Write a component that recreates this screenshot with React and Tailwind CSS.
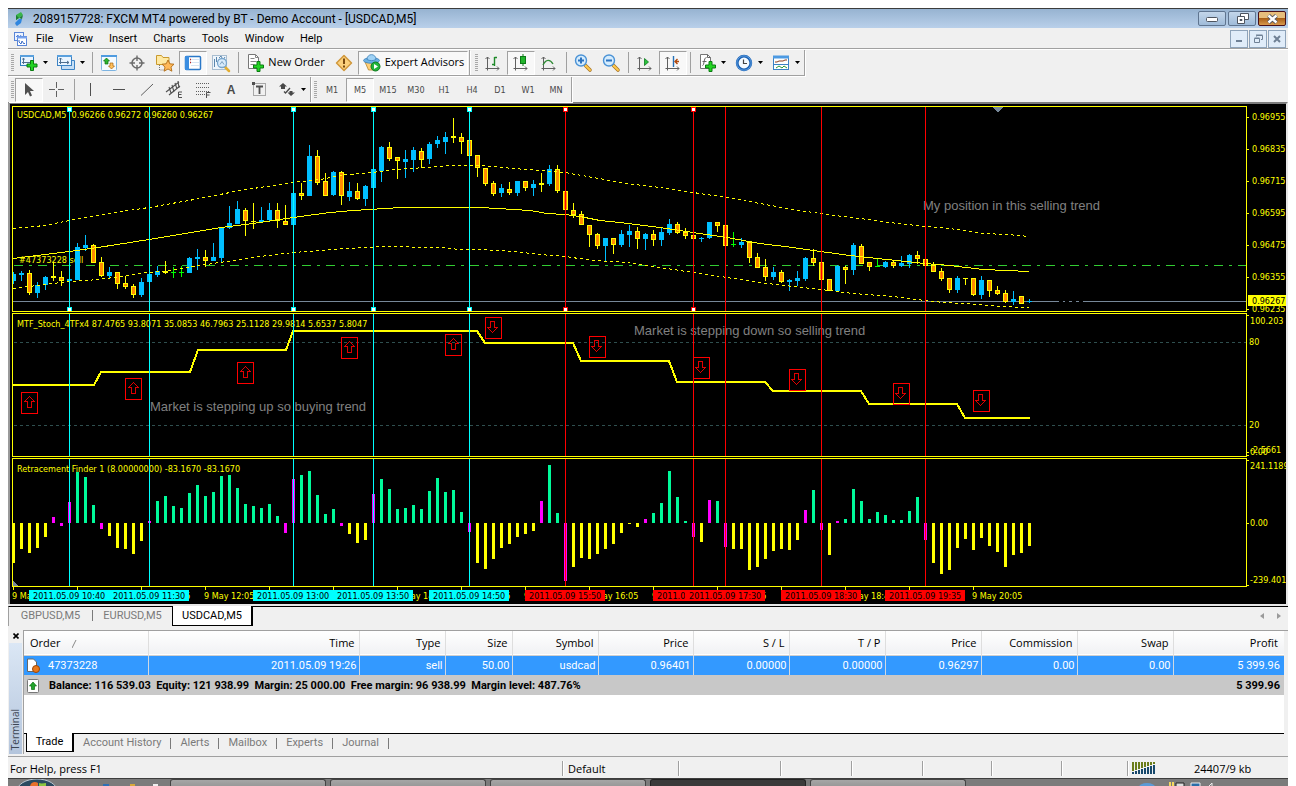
import React from "react";

/* ---------- chart data ---------- */

// One entry per bar: kind, high, body top, body bottom, low (measured down from y = 100).
const CANDLES = `b172,174,181,184 b171,173,175,181 o170,173,193,195 b182,185,193,198 b176,177,185,190 o162,176,178,181 o171,177,181,186 b178,179,181,182
b143,147,180,180 b135,145,148,151 o144,145,163,163 o157,162,176,177 b167,172,176,179 o172,172,184,189 o176,183,187,189 o184,186,195,198
b178,182,195,197 b174,174,182,182 b166,171,175,177 o161,171,173,174 g167,172,173,178 g166,172,173,177 b157,158,173,173 b149,157,159,170
o150,157,161,167 b143,157,161,161 b127,127,158,162 b106,123,128,129 b101,109,124,124 o108,110,121,136 o103,121,122,129 b107,120,122,123
b103,110,120,122 o103,110,121,128 o105,121,125,125 b93,93,125,125 o83,93,96,100 b45,56,96,96 o50,56,83,85 o73,81,96,96
b71,72,95,96 o71,72,96,105 b82,91,97,101 o83,91,99,100 b85,86,99,106 b69,69,88,88 b46,47,71,82 o42,47,59,61
o57,57,61,79 b50,59,62,78 b47,50,60,72 o48,51,60,68 b42,44,59,64 b36,40,44,48 b32,37,42,54 o18,36,38,43
o33,37,42,54 o40,40,56,56 o55,55,68,77 o68,68,84,86 o81,83,94,96 b84,88,93,97 o82,89,93,95 b81,81,93,96
o81,81,88,91 b80,84,88,96 o73,83,85,92 b65,69,84,86 o65,69,91,93 o91,91,110,110 o103,110,115,118 o111,114,125,125
o125,125,135,147 o133,134,146,149 b138,138,146,162 o138,138,145,154 b130,134,145,147 b125,131,135,147 o127,131,139,149 b133,134,139,150
o130,134,140,146 b128,132,140,146 b119,124,133,135 o122,124,133,134 o128,132,136,139 o135,135,139,139 b137,138,139,142 b122,122,138,139
o122,122,126,132 o125,125,146,146 g132,144,145,147 b138,142,145,148 o141,142,158,163 o153,157,168,168 o159,167,177,181 b167,172,177,180
o170,172,182,183 b179,180,182,191 b171,178,181,186 b157,158,179,181 o149,158,163,166 o162,162,180,180 o179,179,191,191 b165,166,191,191
o166,167,170,184 b143,145,170,175 o144,146,164,164 o162,162,167,171 g159,166,167,167 b161,162,167,168 o160,162,166,168 b156,163,166,167
b154,155,164,168 o151,155,159,164 o159,159,166,166 o162,165,172,172 o168,171,179,181 o178,178,190,193 b176,178,190,193 o178,178,179,185
o178,178,195,196 b176,180,195,199 o180,180,191,197 o186,190,194,195 o190,193,202,203 b191,199,202,205 o196,196,204,204 b199,201,202,203`
  .split(/\s+/)
  .map((s) => ({ kind: s[0], v: s.slice(1).split(",").map((n) => Number(n) + 100) }));

// Signed bar heights; a leading "m" marks the magenta bars.
const HISTOGRAM =
  "-40 -26 -30 -25 -14 m6 m-3 m21 51 46 18 m-6 -13 -25 -26 -31 -18 m2 22 27 17 15 30 38 27 31 47 48 35 19 17 15 19 7 m-10 m44 48 52 28 9 14 m-3 -11 -20 -17 m29 44 34 14 15 18 14 32 45 31 33 11 m-9 -40 -46 -36 -25 -21 -14 -11 -8 m22 58 10 m-58 -44 -35 -36 -31 -26 -21 -10 -1 -4 m4 10 20 52 26 2 m-14 -19 m23 22 m-24 -26 -26 -47 -44 -36 -28 -26 -27 -17 m13 33 m-7 -32 m2 4 34 22 4 11 8 3 3 12 26 m-17 -40 -51 -47 -25 -16 -27 -15 -23 -29 -44 -32 -30 -23".split(
    " "
  );

const MIDDLE =
  "13,258 45,254 69,251 98,247 149,239 185,233 221,227 253,223 293,217 330,212 353,210 385,208 402,207 480,207 498,208 530,210 547,213 565,214 580,216 600,220 620,222 660,227 693,232 727,237 760,243 793,247 813,250 850,255 887,259 925,263 950,265 983,269 1029,271";
const UPPER =
  "13,228 45,225 69,220 98,215 115,212 149,207 200,198 240,190 293,182 320,179 347,174 373,172 393,169 427,167 453,165 480,165 513,168 540,170 565,172 593,177 627,183 660,187 693,192 727,197 760,203 793,209 827,214 860,218 890,222 925,226 950,228 983,233 1007,234 1029,236";
const LOWER =
  "13,288 45,284 69,281 88,280 115,277 145,272 165,271 200,265 233,260 260,256 293,252 320,250 347,248 383,246 440,247 460,249 480,249 513,251 540,254 565,256 593,260 627,262 660,267 693,272 727,277 760,282 793,286 821,289 853,293 893,296 925,300 943,302 967,303 1000,306 1029,307";
const STEPS =
  "13,385 94,385 101,372 190,372 198,350 286,350 293,331 477,331 485,343 573,343 581,361 669,361 677,382 765,382 773,391 861,391 869,404 957,404 965,418 1030,418";

const CYAN = "#00ffff";
const RED = "#ff0000";
const TIME_LINES = [
  { x: 69, c: CYAN, t: "10:40", handle: true },
  { x: 149, c: CYAN, t: "11:30" },
  { x: 293, c: CYAN, t: "13:00", handle: true },
  { x: 373, c: CYAN, t: "13:50", handle: true },
  { x: 469, c: CYAN, t: "14:50", handle: true },
  { x: 565, c: RED, t: "15:50", handle: true },
  { x: 693, c: RED, t: "16:50", handle: true },
  { x: 725, c: RED, t: "17:30" },
  { x: 821, c: RED, t: "18:30" },
  { x: 925, c: RED, t: "19:35" },
];
// One tick every 64px; an empty entry is a tick whose label a time marker covers.
const AXIS_TIMES = ["10:05", "", "11:25", "12:05", "", "", "14:05", "14:45", "15:25", "16:05", "16:45", "17:25", "", "18:45", "", "20:05"];
const UP_ARROWS = [[21, 392], [125, 378], [237, 362], [341, 337], [445, 334]];
const DOWN_ARROWS = [[485, 317], [589, 336], [693, 357], [789, 369], [893, 383], [973, 390]];

const CHART_FONT = "font-['DejaVu_Sans_Condensed','DejaVu_Sans',sans-serif] text-[9px]";

/* ---------- chart pieces ---------- */

function Plot({ ox, oy, children }) {
  return (
    <svg className="block h-full w-full" shapeRendering="crispEdges">
      <g transform={`translate(${-ox} ${-oy})`}>{children}</g>
    </svg>
  );
}

function TimeLines({ y, h, handles }) {
  return TIME_LINES.map((l) => (
    <g key={l.x}>
      <rect x={l.x} y={y} width="1" height={h} fill={l.c} />
      {handles && l.handle && [107, 307].map((hy) => (
        <g key={hy}>
          <rect x={l.x - 2} y={hy} width="5" height="5" fill={l.c} />
          <rect x={l.x - 1} y={hy + 1} width="3" height="3" fill="#fff" />
        </g>
      ))}
    </g>
  ));
}

function Candle({ i, kind, v }) {
  const [hi, top, bot, lo] = v;
  const x = 13 + i * 8;
  const color = kind === "b" ? "#00bfff" : kind === "g" ? "#00ff00" : "#ffff00";
  return (
    <g>
      <rect x={x} y={hi} width="1" height={Math.max(lo - hi, 1)} fill={color} />
      <rect x={x - 2} y={top} width="5" height={bot - top} fill={color} />
      {kind === "o" && bot - top > 2 && <rect x={x - 1} y={top + 1} width="3" height={bot - top - 2} fill="#ff8c00" />}
    </g>
  );
}

function Panel({ height, left, scale }) {
  return (
    <div className={`flex w-full ${height}`}>
      <div className="min-w-0 flex-1 border border-[#ffff00]">{left}</div>
      <div className="w-[39px] shrink-0">{scale}</div>
    </div>
  );
}

const yellowText = (x, y, t) => (
  <text key={t + y} x={x} y={y} fill="#ffff00" xmlSpace="preserve">{t}</text>
);

function Chart() {
  return (
    <section aria-label="USDCAD chart" className={`border-t-2 border-r-2 border-l-2 border-t-[#7c7c7c] border-r-[#e6e6e6] border-l-[#9a9a9a] bg-black pt-[2px] pl-[2px] ${CHART_FONT}`}>
      <Panel
        height="h-[206px]"
        left={
          <Plot ox={13} oy={107}>
            <rect x="13" y="301" width="2400" height="1" fill="#778899" />
            <path d="M1059 301.5h10M1072 301.5h4M1079 301.5h4" stroke="#000" strokeDasharray="4 2" />
            <path d="M14 265.5H2400" stroke="#32cd32" strokeDasharray="9 6 3 6" />
            {yellowText(17, 118, "USDCAD,M5  0.96266 0.96272 0.96260 0.96267")}
            {yellowText(19, 263, "#47373228 sell")}
            {CANDLES.map((c, i) => <Candle key={i} i={i} {...c} />)}
            <g fill="none" stroke="#ffff00" transform="translate(0 .5)">
              <polyline points={MIDDLE} />
              <polyline points={UPPER} strokeDasharray="3 3" />
              <polyline points={LOWER} strokeDasharray="3 3" />
            </g>
            <text x="923" y="210" fill="#808080" className="font-['Liberation_Sans',sans-serif] text-[13px]">My position in this selling trend</text>
            <TimeLines y={107} h={204} handles />
            <path d="M992 107h11l-5 5h-1z" fill="#778899" />
          </Plot>
        }
        scale={
          <Plot ox={1247} oy={106}>
            {["0.96955", "0.96835", "0.96715", "0.96595", "0.96475", "0.96355", "0.96235"].map((p, i) => (
              <g key={p}>
                <rect x="1247" y={117 + i * 32} width="2" height="1" fill="#ffff00" />
                {yellowText(1252, 120 + i * 32, p)}
              </g>
            ))}
            <rect x="1248" y="295" width="60" height="11" fill="#ffff00" />
            <text x="1252" y="304" fill="#000">0.96267</text>
          </Plot>
        }
      />
      <div className="h-px" />
      <Panel
        height="h-[144px]"
        left={
          <Plot ox={13} oy={314}>
            <path d="M14 342.5H2400M14 425.5H2400" stroke="#2f4f4f" strokeDasharray="3 3" />
            {yellowText(17, 327, "MTF_Stoch_4TFx4 87.4765 93.8071 35.0853 46.7963 25.1128 29.9814 5.6537 5.8047")}
            <polyline points={STEPS} fill="none" stroke="#ffff00" strokeWidth="2" />
            <g fill="#808080" className="font-['Liberation_Sans',sans-serif] text-[13px]">
              <text x="150" y="411">Market is stepping up so buying trend</text>
              <text x="634" y="335">Market is stepping down so selling trend</text>
            </g>
            <TimeLines y={314} h={142} />
            {UP_ARROWS.map(([x, y]) => (
              <g key={x} transform={`translate(${x} ${y})`} fill="none" stroke={RED}>
                <rect x=".5" y=".5" width="16" height="21" />
                <path d="M8.5 4.5L3.5 9.500H6.500V15.500H10.500V9.500H13.500Z" stroke="#e00000" />
              </g>
            ))}
            {DOWN_ARROWS.map(([x, y]) => (
              <g key={x} transform={`translate(${x} ${y})`} fill="none" stroke={RED}>
                <rect x=".5" y=".5" width="16" height="21" />
                <path d="M7.500 15.500L2.500 10.500H5.500V4.500H9.500V10.500H12.500Z" stroke="#e00000" />
              </g>
            ))}
          </Plot>
        }
        scale={
          <Plot ox={1247} oy={313}>
            <path d="M1247 315.5h2M1247 452.5h2M1247 455.5h2" stroke="#ffff00" />
            {yellowText(1250, 324, "100.203")}
            {yellowText(1249, 345, "80")}
            {yellowText(1249, 428, "20")}
            {yellowText(1250, 455, "0.00")}
            {yellowText(1250, 453, "-2.5661")}
          </Plot>
        }
      />
      <div className="h-px" />
      <Panel
        height="h-[129px]"
        left={
          <Plot ox={13} oy={459}>
            {yellowText(17, 472, "Retracement Finder 1 (8.00000000) -83.1670 -83.1670")}
            {HISTOGRAM.map((s, i) => {
              const magenta = s[0] === "m";
              const n = Number(s.replace("m", ""));
              return (
                <rect key={i} x={12 + i * 8} y={n > 0 ? 523 - n : 523} width="3" height={Math.abs(n)}
                  fill={magenta ? "#ff00ff" : n > 0 ? "#00fa9a" : "#ffff00"} />
              );
            })}
            <TimeLines y={459} h={127} />
            <path d="M13 581v5h5z" fill="#778899" />
          </Plot>
        }
        scale={
          <Plot ox={1247} oy={458}>
            <path d="M1247 460.5h2M1247 523.5h2M1247 585.5h2" stroke="#ffff00" />
            {yellowText(1250, 469, "241.1189")}
            {yellowText(1250, 526, "0.00")}
            {yellowText(1250, 583, "-239.401")}
          </Plot>
        }
      />
      <div className="h-[17px]">
        <Plot ox={12} oy={587}>
          {AXIS_TIMES.map((t, i) => (
            <g key={i}>
              <rect x={13 + i * 64} y="587" width="1" height="3" fill="#ffff00" />
              {t && yellowText(12 + i * 64, 599, `9 May ${t}`)}
            </g>
          ))}
          {TIME_LINES.map((l) => (
            <g key={l.x}>
              <rect x={l.x - 40} y="590" width="80" height="11" fill={l.c} />
              <text x={l.x - 36} y="599" fill="#000">2011.05.09 {l.t}</text>
            </g>
          ))}
        </Plot>
      </div>
    </section>
  );
}

/* ---------- toolbar icons ---------- */

const Svg = ({ w = 20, h = 20, children }) => (
  <svg width={w} height={h} viewBox={`0 0 ${w} ${h}`} className="block shrink-0">{children}</svg>
);

const GreenPlus = ({ x = 8, y = 9 }) => (
  <path transform={`translate(${x} ${y})`} d="M4 .5h3v3.500h3.500v3H7v3.500H4V7H.5V4H4z" fill="#22d422" stroke="#0b7a12" />
);

const Axes = ({ children }) => (
  <Svg>
    <path d="M4.500 4v13.500M2.500 15.500h13.500M2.500 6l2-2 2 2M14 13.500l2 2-2 2" fill="none" stroke="#606060" />
    {children}
  </Svg>
);

const Lens = ({ minus }) => (
  <Svg>
    <path d="M12.500 12.500l4.500 4.500" stroke="#a8762a" strokeWidth="3.600" strokeLinecap="round" />
    <path d="M12.500 12.500l4.500 4.500" stroke="#ffc94a" strokeWidth="2" strokeLinecap="round" />
    <circle cx="8" cy="7.500" r="5.500" fill="#d5ecfd" stroke="#4a92d6" strokeWidth="1.400" />
    <path d={minus ? "M5 7.500h6" : "M5 7.500h6M8 4.500v6"} stroke="#2b72c0" strokeWidth="2" />
  </Svg>
);

const icons = {
  newChart: (
    <Svg>
      <rect x="1.500" y="2.500" width="13" height="10" fill="#eaf5ff" stroke="#2f7fc1" />
      <path d="M1 3h14" stroke="#5aa0dd" strokeWidth="2" />
      <path d="M4.500 5v6M3 9.500h8M3.500 6.500l1-1.500 1 1.500" stroke="#507090" fill="none" />
      <GreenPlus x="7.500" y="7" />
    </Svg>
  ),
  profiles: (
    <Svg>
      <path d="M5.500 13v3.500h13V7.500H16" fill="#c5def5" stroke="#3c83c4" />
      <rect x="1.500" y="2.500" width="14" height="10" fill="#eaf5ff" stroke="#3c83c4" />
      <path d="M1 3h15" stroke="#5aa0dd" strokeWidth="2" />
      <path d="M4.500 5v6M3 9.500h10M11 8l2 1.500-2 1.500M3 6.500l1.500-1.500L6 6.500" stroke="#507090" fill="none" />
    </Svg>
  ),
  market: (
    <Svg>
      <rect x="2.500" y="2.500" width="15" height="15" rx="1" fill="#f4faff" stroke="#7db4e2" />
      <path d="M2 3h16" stroke="#4f9be0" strokeWidth="2" />
      <path d="M7.500 5l3 3H9v3H6V8H4.500z" fill="#2bb52f" stroke="#0f6d13" strokeWidth=".7" />
      <path d="M12.500 16l-3-3H11v-3h3v3h1.500z" fill="#ffc05c" stroke="#a8640f" strokeWidth=".7" />
    </Svg>
  ),
  data: (
    <Svg>
      <circle cx="10" cy="10" r="5" fill="none" stroke="#6b6b6b" strokeWidth="1.500" />
      <path d="M10 2.500V8M10 12v5.500M2.500 10H8M12 10h5.500" stroke="#6b6b6b" strokeWidth="1.400" />
    </Svg>
  ),
  navigator: (
    <Svg>
      <path d="M1.500 2.500h5l1.500 2h6v7h-12.500z" fill="#ffe9a3" stroke="#c99a2e" />
      <path d="M4.500 12v5h5" stroke="#777" strokeDasharray="1 1" fill="none" />
      <path d="M13 7l1.800 3.800 4.200.4-3 2.900.9 4.100-3.900-2.200-3.900 2.200.9-4.100-3-2.900 4.200-.4z" fill="#ffb95a" stroke="#b06c15" strokeWidth=".9" />
    </Svg>
  ),
  terminal: (
    <Svg>
      <rect x="2.500" y="3.500" width="15" height="13" rx="1" fill="#fff" stroke="#2a78c8" strokeWidth="1.500" />
      <rect x="2" y="3" width="4" height="14" fill="#3a8de0" />
      <path d="M8 6.500h8M8 9.500h8M8 12.500h8" stroke="#d6e5f3" />
      <path d="M7 6.500h1M7 9.500h1" stroke="#b22" strokeWidth="1.500" />
    </Svg>
  ),
  tester: (
    <Svg>
      <rect x="1.500" y="2.500" width="14" height="14" fill="#eef5fb" stroke="#a8bdd0" />
      <path d="M3.500 14V6M5.500 4v5M8 5l2-2 2 4 2-3" stroke="#5a86ad" fill="none" />
      <path d="M14 14l4 4" stroke="#e3ae32" strokeWidth="2.500" strokeLinecap="round" />
      <circle cx="11" cy="10" r="4.500" fill="#d9ecfc" stroke="#78a5cc" strokeWidth="1.300" />
      <path d="M9 11.500l2-3 2 3" stroke="#7ba0c0" fill="none" />
    </Svg>
  ),
  order: (
    <Svg>
      <path d="M3.500 1.500h7l3 3v11h-10z" fill="#fff" stroke="#777" />
      <path d="M10.500 1.500v3h3M5.500 5.500h4M5.500 8.500h6M5.500 11.500h4" stroke="#888" fill="none" />
      <GreenPlus x="8" y="8" />
    </Svg>
  ),
  warn: (
    <Svg>
      <path d="M10 2.500l7.500 7.500-7.500 7.500L2.500 10z" fill="#fbd07c" stroke="#d0983c" strokeWidth="1.500" strokeLinejoin="round" />
      <path d="M10 5.500v5.500M10 12.500v2" stroke="#7a4a10" strokeWidth="2" />
    </Svg>
  ),
  expert: (
    <Svg>
      <path d="M3 9h13l-2.500 8h-7z" fill="#ffcf78" stroke="#b98528" strokeWidth=".8" />
      <ellipse cx="9.500" cy="7.500" rx="8" ry="2.800" fill="#6cb2e6" stroke="#3a7fb8" strokeWidth=".8" />
      <path d="M5 6.500C5 0 14 0 14 6.500c-3 1.500-6 1.500-9 0z" fill="#9fd2f5" stroke="#3a7fb8" strokeWidth=".8" />
      <circle cx="13.500" cy="13.500" r="4.500" fill="#22b53a" stroke="#0e7a20" />
      <path d="M12 11v5l4-2.500z" fill="#fff" />
    </Svg>
  ),
  bars: <Axes><path d="M11.500 4v9M11.500 4.500h2.500M9 11.500h2.500" stroke="#1f8a2a" strokeWidth="1.400" fill="none" /></Axes>,
  candles: <Axes><path d="M12 1v12" stroke="#0c7a17" /><rect x="9.500" y="3.500" width="5" height="7" fill="#22b52c" stroke="#0c7a17" /></Axes>,
  line: <Axes><path d="M4 12c3-6 7-6 10-1" stroke="#2f8a35" strokeWidth="1.400" fill="none" /></Axes>,
  scroll: <Axes><path d="M9.500 5.500v7l4-3.500z" fill="#29c23a" stroke="#0e7a20" strokeWidth=".8" /></Axes>,
  shift: <Axes><path d="M10.500 3v11" stroke="#2671b8" strokeWidth="1.400" /><path d="M16 8.500h-4M14.500 6L12 8.500l2.500 2.500" stroke="#b04a10" strokeWidth="1.400" fill="none" /></Axes>,
  indicators: (
    <Svg>
      <path d="M3.500 1.500h7l3 3v11h-10z" fill="#fff" stroke="#777" />
      <path d="M5.500 12.500c2 0 1-8 4-8M5.500 8.500h4M10.500 1.500v3h3" stroke="#666" fill="none" />
      <GreenPlus x="8" y="8" />
    </Svg>
  ),
  clock: (
    <Svg>
      <circle cx="10" cy="10" r="6.800" fill="#f4faff" stroke="#1d63b5" strokeWidth="2.800" />
      <circle cx="10" cy="10" r="7.200" fill="none" stroke="#6aa9ea" strokeWidth=".8" />
      <path d="M9.500 6.500v4H13" stroke="#444" strokeWidth="1.200" fill="none" />
    </Svg>
  ),
  template: (
    <Svg>
      <rect x="2.500" y="3.500" width="15" height="13" fill="#fff" stroke="#3a82c4" />
      <path d="M2 4h16" stroke="#4d9ae2" strokeWidth="3" />
      <path d="M4 9h2l2-1h4l2-1h2" stroke="#8a3a1a" fill="none" />
      <path d="M3 11.500h14" stroke="#3a82c4" />
      <path d="M5 15l3-2 3 2 2-2 3 2" stroke="#2a9a3a" fill="none" />
    </Svg>
  ),
  cursor: <Svg><path d="M6 3v12l3-3 2 4.500 2-1-2-4.500h4z" fill="#505050" /></Svg>,
  cross: <Svg><path d="M9.500 2v6M9.500 11v6M2 9.500h6M11 9.500h6" stroke="#606060" /></Svg>,
  vline: <Svg><path d="M9.500 3v13" stroke="#505050" /></Svg>,
  hline: <Svg><path d="M4 9.500h12" stroke="#505050" /></Svg>,
  trend: <Svg><path d="M4 15.500L16 4" stroke="#606060" /></Svg>,
  equi: (
    <Svg>
      <path d="M1 12L14 2M4 15L15 6M4 7l2 6M7 5l2 7M10 3l2 6M13 1l1 7" stroke="#505050" strokeWidth="1.100" />
      <path d="M13.500 12v5.500h3.500M13.500 12h3.500M13.500 14.500h3" stroke="#505050" fill="none" />
    </Svg>
  ),
  fibo: (
    <Svg>
      <path d="M3 3.500h13M3 7.500h13M3 11.500h13M3 14.500h9" stroke="#606060" strokeDasharray="1 1" />
      <path d="M13.500 18v-5.500h4M13.500 15h3" stroke="#505050" fill="none" />
    </Svg>
  ),
  label: (
    <Svg>
      <rect x="4.500" y="3.500" width="12" height="12" fill="none" stroke="#606060" strokeDasharray="1 1" />
      <path d="M3 2h3v3H3z" fill="#505050" />
      <path d="M7 6.500h7M10.500 6v8" stroke="#505050" strokeWidth="1.800" />
    </Svg>
  ),
  arrows: (
    <Svg>
      <path d="M6 3l4 3.500H8V9H4V6.500H2zM14 16l-3.500-3.500h2V11h3v1.500H18z" fill="#484848" />
      <path d="M7 11.500l1.500 1.500L13 8" stroke="#484848" fill="none" strokeWidth="1.300" />
    </Svg>
  ),
};

const PRESSED = "border border-t-[#a0a0a0] border-r-white border-b-white border-l-[#a0a0a0] bg-[#f8f8f8]";

function Tool({ icon, label, pressed, drop, children, className }) {
  return (
    <button
      type="button"
      aria-label={children ? undefined : label}
      aria-pressed={pressed ? true : undefined}
      className={`flex h-[24px] shrink-0 items-center justify-center ${drop ? "w-[37px] gap-1" : className || "w-[28px]"} ${pressed ? PRESSED : ""}`}
    >
      {icons[icon]}
      {children}
      {drop && <Drop />}
    </button>
  );
}

const Drop = () => (
  <svg width="5" height="3" viewBox="0 0 5 3" className="block shrink-0"><path d="M0 0h5L2.500 3z" fill="#000" /></svg>
);
const Sep = () => <div className="mr-[2px] ml-[3px] h-[21px] w-px shrink-0 bg-[#a0a0a0]" />;
const Grip = () => (
  <div className="mr-px ml-[3px] h-[18px] w-[3px] shrink-0 bg-[repeating-linear-gradient(#a8a8a8_0_1px,#f0f0f0_1px_2px)]" />
);

/* ---------- window chrome ---------- */

function TitleBar() {
  const btn = "flex h-[15px] w-[28px] items-center justify-center rounded-[2px] border";
  return (
    <header className="flex h-5 items-center border-t border-[#3c3c3c] bg-gradient-to-b from-[#97b3d1] to-[#b9d0ea] pr-[2px] pl-1">
      <svg width="14" height="16" viewBox="0 0 14 16" className="mr-[7px] block">
        <path d="M4 4l5-3 2 3-4 3-3 2z" fill="#39b54a" />
        <path d="M4 4v5l3-2zM11 4l-1 4-3-1z" fill="#1d7d35" />
        <path d="M3 12l4-4 3 0-1 4-4 3z" fill="#2f86e0" />
        <path d="M3 12l2 3-1-1z" fill="#174f9b" />
      </svg>
      <h1 className="flex-1 font-['Roboto',sans-serif] text-[12px] leading-4 text-black">
        2089157728: FXCM MT4 powered by BT - Demo Account - [USDCAD,M5]
      </h1>
      <div className="flex gap-[2px]">
        <button type="button" aria-label="Minimize" className={`${btn} border-[#5f7590] bg-gradient-to-b from-[#c3d6ea] to-[#9fbbd9]`}>
          <svg width="12" height="6" viewBox="0 0 12 6"><rect x=".5" y="1.500" width="11" height="4" rx="1" fill="#fff" stroke="#4e5560" /></svg>
        </button>
        <button type="button" aria-label="Restore" className={`${btn} border-[#5f7590] bg-gradient-to-b from-[#c3d6ea] to-[#9fbbd9]`}>
          <svg width="13" height="11" viewBox="0 0 13 11"><path d="M4.500.5h8v6h-8z" fill="#fff" stroke="#4e5560" /><path d="M1.500 3.500h7v7h-7z" fill="#fff" stroke="#4e5560" /><path d="M4 6.500h2v1H4z" fill="#9fbbd9" stroke="#4e5560" /></svg>
        </button>
        <button type="button" aria-label="Close" className={`${btn} border-[#4a1018] bg-[linear-gradient(#e6be7c_0_45%,#a95f17_50%,#d99a4c)]`}>
          <svg width="13" height="10" viewBox="0 0 13 10"><path d="M2.500 1.500l8 7M10.500 1.500l-8 7" stroke="#4e5560" strokeWidth="4.200" /><path d="M2.500 1.500l8 7M10.500 1.500l-8 7" stroke="#fff" strokeWidth="2.400" /></svg>
        </button>
      </div>
    </header>
  );
}

function MenuBar() {
  const mdi = "flex h-[18px] w-[18px] items-center justify-center border border-[#8ea3ba] bg-[#e0ecf9]";
  return (
    <nav className="flex h-[22px] items-center border-b border-white pr-[2px] pl-[5px] font-['Roboto',sans-serif] text-[11px] leading-4 text-black shadow-[inset_0_-1px_0_#a0a0a0]">
      <svg width="15" height="15" viewBox="0 0 15 15" className="mr-2 block">
        <rect x="1.500" y="1.500" width="9" height="8" fill="#eef4ff" stroke="#5a86d8" />
        <path d="M3 6l2-2 1 3 2-3" stroke="#5a86d8" fill="none" />
        <rect x="4.500" y="5.500" width="9" height="9" fill="#fff" stroke="#5a86d8" />
        <path d="M4 6.500h10" stroke="#7aa4ee" strokeWidth="2" />
        <path d="M6 9v2l2 2 1-3 2 3 1-1" stroke="#3f70c8" fill="none" />
      </svg>
      <div className="flex flex-1 gap-4">
        {["File", "View", "Insert", "Charts", "Tools", "Window", "Help"].map((m) => (
          <button type="button" key={m}>{m}</button>
        ))}
      </div>
      <div className="flex gap-px">
        <button type="button" aria-label="Minimize chart" className={mdi}><svg width="8" height="8"><path d="M1 6h6" stroke="#6f8095" strokeWidth="2" /></svg></button>
        <button type="button" aria-label="Restore chart" className={mdi}><svg width="9" height="9"><path d="M2.500 2.500v-1h6v4h-1.500M.5 4.500h5v4h-5zM2 1h6.500M.5 4h5" fill="none" stroke="#6f8095" /></svg></button>
        <button type="button" aria-label="Close chart" className={mdi}><svg width="8" height="8"><path d="M1 1l6 6M7 1L1 7" stroke="#6f8095" strokeWidth="2" /></svg></button>
      </div>
    </nav>
  );
}

function Toolbars() {
  const group = "flex items-center border-r border-[#a0a0a0] shadow-[1px_1px_0_#fff]";
  return (
    <div>
      <div className="flex h-[27px] items-start font-['Open_Sans',sans-serif] text-[11px] text-black">
        <div className={`${group} h-[26px] border-b pr-px`}>
          <Grip />
          <Tool icon="newChart" label="New chart" drop />
          <Tool icon="profiles" label="Profiles" drop />
          <Sep />
          <Tool icon="market" label="Market Watch" />
          <Tool icon="data" label="Data Window" />
          <Tool icon="navigator" label="Navigator" />
          <Tool icon="terminal" label="Terminal" pressed />
          <Tool icon="tester" label="Strategy Tester" />
          <Sep />
          <Tool icon="order" className="w-[88px] gap-[3px]"><span className="whitespace-nowrap">New Order</span></Tool>
          <Tool icon="warn" label="MetaEditor" className="w-[29px]" />
          <Tool icon="expert" pressed className="w-[110px] gap-[3px]"><span className="whitespace-nowrap">Expert Advisors</span></Tool>
        </div>
        <div className={`${group} h-[26px] border-b pl-[2px]`}>
          <Grip />
          <Tool icon="bars" label="Bar chart" />
          <Tool icon="candles" label="Candlesticks" pressed />
          <Tool icon="line" label="Line chart" />
          <Sep />
          <button type="button" aria-label="Zoom in" className="flex w-[28px] justify-center"><Lens /></button>
          <button type="button" aria-label="Zoom out" className="flex w-[28px] justify-center"><Lens minus /></button>
          <Sep />
          <Tool icon="scroll" label="Auto scroll" />
          <Tool icon="shift" label="Chart shift" pressed />
          <Sep />
          <Tool icon="indicators" label="Indicators" drop />
          <Tool icon="clock" label="Periods" drop />
          <Tool icon="template" label="Templates" drop />
        </div>
      </div>
      <div className="flex h-[25px] text-[#4a4a4a]">
        <div className={group}>
          <Grip />
          <Tool icon="cursor" label="Cursor" pressed />
          <Tool icon="cross" label="Crosshair" />
          <Sep />
          <Tool icon="vline" label="Vertical line" />
          <Tool icon="hline" label="Horizontal line" />
          <Tool icon="trend" label="Trendline" />
          <Tool icon="equi" label="Equidistant channel" />
          <Tool icon="fibo" label="Fibonacci retracement" />
          <button type="button" aria-label="Text" className="w-[28px] text-center font-['Liberation_Sans',sans-serif] text-[12px] font-bold">A</button>
          <Tool icon="label" label="Text label" />
          <Tool icon="arrows" label="Arrows" drop />
        </div>
        <div className={`${group} pr-px ${CHART_FONT}`}>
          <Grip />
          {["M1", "M5", "M15", "M30", "H1", "H4", "D1", "W1", "MN"].map((p) => (
            <button
              type="button"
              key={p}
              aria-pressed={p === "M5"}
              className={`h-[24px] w-[28px] pt-[2px] text-center ${p === "M5" ? PRESSED : ""}`}
            >
              {p}
            </button>
          ))}
        </div>
      </div>
    </div>
  );
}

function ChartTabs() {
  return (
    <div className="flex h-[22px] items-start border-t-2 border-t-[#e6e6e6] font-['Roboto',sans-serif] text-[11px] leading-4 text-[#7a7a7a]">
      <div className="flex h-[20px] w-full items-start border-t border-l border-t-black border-l-[#a0a0a0]">
        <button type="button" className="w-[83px] pt-px text-center">GBPUSD,M5</button>
        <span className="mt-[3px] h-[11px] w-px bg-[#7a7a7a]" />
        <button type="button" className="w-[79px] pt-px text-center">EURUSD,M5</button>
        <button type="button" aria-current="page" className="-mt-px h-[20px] w-[81px] border-r-2 border-b border-l border-black bg-white text-black">USDCAD,M5</button>
        <span className="flex-1" />
        <button type="button" aria-label="Scroll tabs left" className="mt-[6px] mr-[13px]"><svg width="4" height="6" className="block"><path d="M4 0v6L0 3z" fill="#9a9a9a" /></svg></button>
        <button type="button" aria-label="Scroll tabs right" className="mt-[6px] mr-[7px]"><svg width="4" height="6" className="block"><path d="M0 0v6l4-3z" fill="#9a9a9a" /></svg></button>
      </div>
    </div>
  );
}

const COLUMNS = ["Order", "Time", "Type", "Size", "Symbol", "Price", "S / L", "T / P", "Price", "Commission", "Swap", "Profit"];
const ROW = ["47373228", "2011.05.09 19:26", "sell", "50.00", "usdcad", "0.96401", "0.00000", "0.00000", "0.96297", "0.00", "0.00", "5 399.96"];

function Terminal() {
  return (
    <section aria-label="Terminal" className="mt-[4px] flex h-[124px]">
      <div className="flex w-[15px] shrink-0 flex-col items-center">
        <button type="button" aria-label="Close terminal" className="flex h-[11px] items-center">
          <svg width="6" height="6" className="block"><path d="M.5.5l5 5M5.500.5l-5 5" stroke="#000" strokeWidth="1.600" /></svg>
        </button>
        <div className="mt-[2px] flex w-[13px] flex-1 items-end justify-center bg-gradient-to-b from-[#dbe7f5] to-[#b4c5dc] pb-1">
          <span className="rotate-180 font-['Open_Sans',sans-serif] text-[10px] leading-[13px] text-[#3c4654] [writing-mode:vertical-rl]">Terminal</span>
        </div>
      </div>
      <div className="flex min-w-0 flex-1 flex-col border-t border-l border-[#a0a0a0] pr-[4px]">
        <div className="flex-1 border-b border-black bg-white">
          <table className="w-full table-fixed border-collapse font-['Open_Sans',sans-serif] text-[11px] leading-4 text-black">
            <colgroup>
              <col className="w-[124px]" /><col className="w-[211px]" /><col className="w-[86px]" /><col className="w-[67px]" /><col className="w-[86px]" />
              <col className="w-[95px]" /><col className="w-[96px]" /><col className="w-[96px]" /><col className="w-[96px]" /><col className="w-[96px]" /><col className="w-[96px]" /><col />
            </colgroup>
            <thead>
              <tr className="h-[24px] border-b border-[#d0d0d0] bg-gradient-to-b from-white to-[#f1f2f4]">
                {COLUMNS.map((c, i) => (
                  <th key={i} scope="col" className={`p-0 font-normal whitespace-nowrap ${i === 0 ? "border-r border-[#dedede] pl-[6px] text-left" : i < 11 ? "border-r border-[#dedede] pr-1 text-right" : "pr-[6px] text-right"}`}>
                    {c}
                    {i === 0 && <svg width="8" height="8" className="ml-[12px] inline"><path d="M0 8L4 0" stroke="#888" /></svg>}
                  </th>
                ))}
              </tr>
            </thead>
            <tbody className="font-['Roboto',sans-serif]">
              <tr className="h-[20px] bg-[#3399ff] text-white">
                {ROW.map((c, i) => (
                  <td key={i} className={`p-0 pt-px whitespace-nowrap ${i === 0 ? "border-r border-[#cfd8e2] text-left" : i < 11 ? "border-r border-[#cfd8e2] pr-[2px] text-right" : "pr-[4px] text-right"}`}>
                    {i === 0 ? (
                      <span className="flex items-center gap-2 pl-[2px]">
                        <svg width="14" height="15" viewBox="0 0 14 15"><path d="M1.500 1h6l3 3v9.500h-9z" fill="#fff" stroke="#666" /><circle cx="10" cy="11" r="3.500" fill="#e8791c" stroke="#9a4708" /></svg>
                        {c}
                      </span>
                    ) : c}
                  </td>
                ))}
              </tr>
              <tr className="h-[20px] bg-[#c8c8c8] font-bold">
                <td colSpan={11} className="p-0 pt-px">
                  <span className="flex items-center gap-[9px] pl-[3px] whitespace-pre">
                    <svg width="13" height="14" viewBox="0 0 13 14"><rect x=".5" y=".5" width="11" height="13" rx="1" fill="#fff" stroke="#777" /><path d="M6 3l3.500 4H7.500v3.500h-3V7H2.500z" fill="#22a52c" stroke="#0c6d13" strokeWidth=".7" /></svg>
                    {"Balance: 116 539.03  Equity: 121 938.99  Margin: 25 000.00  Free margin: 96 938.99  Margin level: 487.76%"}
                  </span>
                </td>
                <td className="p-0 pt-px pr-[4px] text-right">5 399.96</td>
              </tr>
            </tbody>
          </table>
        </div>
        <div className="flex h-[20px] items-start pl-[2px] font-['Roboto',sans-serif] text-[11px] leading-4 text-[#7a7a7a]">
          <button type="button" aria-current="page" className="-mt-px mr-[9px] h-[19px] w-[48px] border-r-2 border-b border-l border-black bg-white text-black">Trade</button>
          {["Account History", "Alerts", "Mailbox", "Experts", "Journal"].map((t) => (
            <span key={t} className="flex items-center pt-px">
              <button type="button">{t}</button>
              <span className="mr-[9px] ml-[9px] h-[11px] w-px bg-[#7a7a7a]" />
            </span>
          ))}
        </div>
      </div>
    </section>
  );
}

function StatusBar() {
  const cell = "h-[15px] shrink-0 border-l border-[#a0a0a0] shadow-[inset_1px_0_0_#fff]";
  return (
    <footer className="mt-[2px] flex h-[22px] items-center border-t border-[#a0a0a0] pt-px pl-[2px] font-['Open_Sans',sans-serif] text-[11px] leading-[15px] text-black">
      <span className="flex-1">For Help, press F1</span>
      <span className={`${cell} w-[116px] pl-[5px]`}>Default</span>
      <span className={`${cell} w-[102px]`} />
      <span className={`${cell} w-[71px]`} />
      <span className={`${cell} w-[71px]`} />
      <span className={`${cell} w-[69px]`} />
      <span className={`${cell} w-[70px]`} />
      <span className={`${cell} w-[66px]`} />
      <span className={`${cell} flex w-[161px] items-center pl-1`}>
        <svg width="24" height="12" viewBox="0 0 24 12" className="mr-[38px] block" shapeRendering="crispEdges">
          {[0, 1, 2, 3, 4, 5, 6, 7].map((i) => (
            <g key={i}>
              <rect x={i * 3} y="0" width="2" height={9 - i} fill="#6b7d1a" />
              <rect x={i * 3} y={10 - i} width="2" height={2 + i} fill="#17486b" />
            </g>
          ))}
        </svg>
        24407/9 kb
      </span>
    </footer>
  );
}

function Taskbar() {
  return (
    <div className="flex h-[30px] shrink-0 items-start border-t border-[#3e3e3e] bg-[#7b7b7b]">
      <svg width="150" height="8" className="mr-[12px] block">
        <ellipse cx="29" cy="12" rx="20" ry="12" fill="#2a4a60" stroke="#b9c6d0" />
        <path d="M22 8c0-5 5-6 8-4v4z" fill="#e8702a" />
        <path d="M31 4c3 1 5 0 7 0v4h-7z" fill="#8cc63f" />
        <path d="M122 6h5" stroke="#d9a93a" strokeWidth="2" />
        <path d="M95 6h6" stroke="#2d6fb5" strokeWidth="2" />
        <path d="M145 6h5" stroke="#eee" strokeWidth="2" />
      </svg>
      <div className="flex gap-1">
        {[0, 1, 2, 3, 4].map((i) => (
          <div key={i} className={`h-[28px] w-[156px] rounded-t-[3px] border border-b-0 ${i === 3 ? "border-[#222] bg-[#3a3a3a]" : "border-[#444] bg-gradient-to-b from-[#a6a6a6] to-[#6c6c6c]"}`} />
        ))}
      </div>
      <span className="flex-1" />
      <svg width="149" height="8" className="block">
        <ellipse cx="8" cy="8" rx="8" ry="4" fill="#5b9ad6" />
        <path d="M31 3v5M34 3v5" stroke="#f5d860" strokeWidth="2" />
        <path d="M37 4h8v4h-8z" fill="#ddd" stroke="#222" />
        <path d="M52 4h9v4h-9z" fill="#2b6da8" stroke="#eee" />
        <path d="M69 8l4-4v4" stroke="#eee" fill="none" />
      </svg>
    </div>
  );
}

export default function App() {
  return (
    <div className="h-screen overflow-hidden bg-white px-2 pt-2">
      <main className="bg-[#f0f0f0]">
        <TitleBar />
        <MenuBar />
        <Toolbars />
        <Chart />
        <ChartTabs />
        <Terminal />
        <StatusBar />
      </main>
      <Taskbar />
    </div>
  );
}
